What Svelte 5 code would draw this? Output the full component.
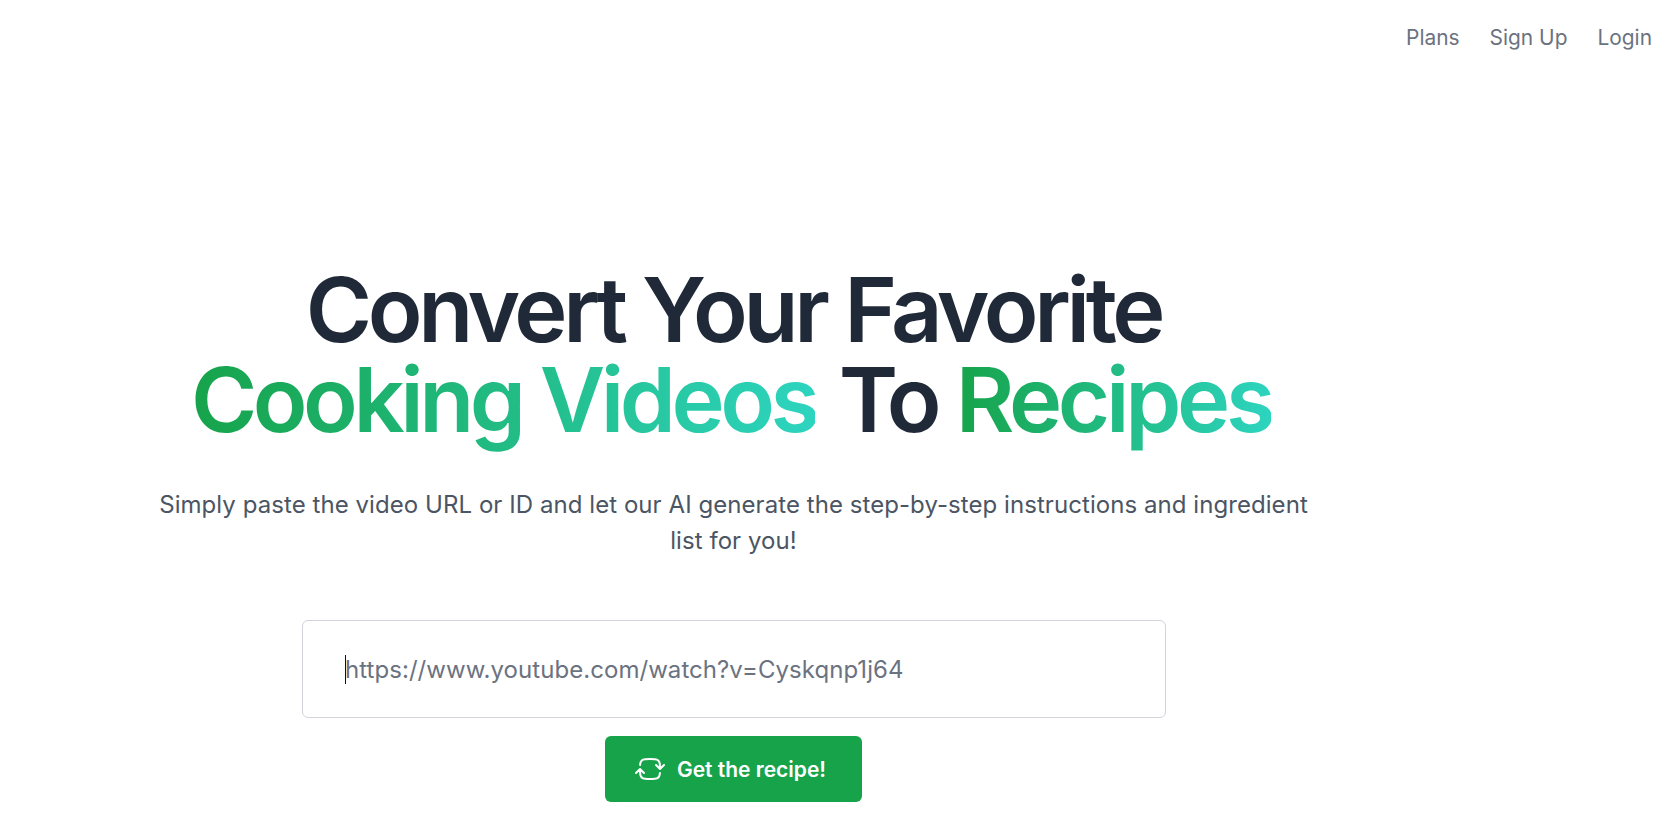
<script>
  let url = $state('');
</script>

<div class="page">
  <nav class="nav">
    <a href="#plans">Plans</a>
    <a href="#signup">Sign Up</a>
    <a href="#login">Login</a>
  </nav>
  <main class="hero">
    <h1>
      <span class="line">Convert Your Favorite</span>
      <span class="line second"><span class="grad first">Cooking Videos</span> To <span class="grad">Recipes</span></span>
    </h1>
    <p>Simply paste the video URL or ID and let our AI generate the step-by-step instructions and ingredient list for you!</p>
    <div class="field">
      <input type="text" bind:value={url} placeholder="https://www.youtube.com/watch?v=Cyskqnp1j64" />
      <span class="caret"></span>
    </div>
    <button type="button">
      <svg viewBox="0 0 24 24" fill="none" stroke="currentColor" stroke-width="1.5" stroke-linecap="round" stroke-linejoin="round"><path d="M19.5 12c0-1.232-.046-2.453-.138-3.662a4.006 4.006 0 0 0-3.7-3.7 48.678 48.678 0 0 0-7.324 0 4.006 4.006 0 0 0-3.7 3.7c-.017.22-.032.441-.046.662M19.5 12l3-3m-3 3-3-3m-12 3c0 1.232.046 2.453.138 3.662a4.006 4.006 0 0 0 3.7 3.7 48.656 48.656 0 0 0 7.324 0 4.006 4.006 0 0 0 3.7-3.7c.017-.22.032-.441.046-.662M4.5 12l3 3m-3-3-3 3"/></svg>
      Get the recipe!
    </button>
  </main>
</div>

<style>
  :global(body) { margin: 0; background: #fff; font-family: Inter, "Noto Sans", sans-serif; overflow: hidden; }
  .page { height: 815px; }
  .nav { display: flex; justify-content: flex-end; gap: 30px; padding: 24px 15px 0 0; font-size: 20.9px; line-height: 28px; }
  .nav a { color: #6b7280; text-decoration: none; }
  .hero { width: 1467px; display: flex; flex-direction: column; align-items: center; padding-top: 213px; text-align: center; }
  h1 { margin: 0; font-size: 90px; line-height: 90px; font-weight: 600; letter-spacing: -0.048em; color: #1f2937; }
  .line { display: block; }
  .second { padding-right: 5px; }
  .grad { background: linear-gradient(to right, #16a34a, #2dd4bf); -webkit-background-clip: text; background-clip: text; color: transparent; }
  .first { letter-spacing: -0.05em; margin-right: 5px; }
  p { margin: 42px 0 0; width: 1160px; font-size: 24px; line-height: 36px; letter-spacing: 0.06px; color: #4b5563; }
  .field { position: relative; margin-top: 61px; }
  input { box-sizing: border-box; display: block; width: 864px; height: 98px; padding: 0 42.5px; border: 1px solid #d1d4dc; border-radius: 6px; background: #fff; font: 400 24px Inter, sans-serif; letter-spacing: 0.05px; color: #111827; outline: none; }
  input::placeholder { color: #6b7280; opacity: 1; }
  .caret { position: absolute; left: 43px; top: 35px; width: 1px; height: 29px; background: #111; }
  button { box-sizing: border-box; margin-top: 18px; width: 257px; height: 66px; padding: 0 7px 0 0; display: flex; align-items: center; justify-content: center; gap: 11px; background: #16a34a; color: #fff; border: 0; border-radius: 6px; font: 600 21px Inter, sans-serif; }
  svg { width: 32px; height: 32px; }
</style>
